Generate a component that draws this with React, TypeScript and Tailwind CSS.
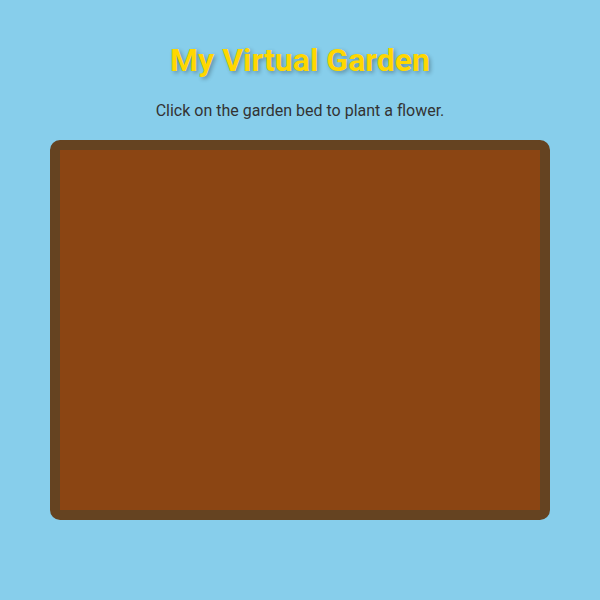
export default function App() {
  return (
    <div className="min-h-[600px] w-full bg-[#87CEEB] pt-[42px] font-['Roboto',sans-serif]">
      <div className="flex flex-col items-center">
        <h1 className="text-[32px] font-bold leading-[37px] text-[#FFD700] [text-shadow:2px_2px_4px_rgba(0,0,0,0.3)]">
          My Virtual Garden
        </h1>
        <p className="mt-[22px] text-[16px] leading-[19px] text-[#333333]">
          Click on the garden bed to plant a flower.
        </p>
        <div className="mt-[20px] h-[380px] w-[500px] rounded-[10px] border-[10px] border-[#654321] bg-[#8B4513]" />
      </div>
    </div>
  );
}
